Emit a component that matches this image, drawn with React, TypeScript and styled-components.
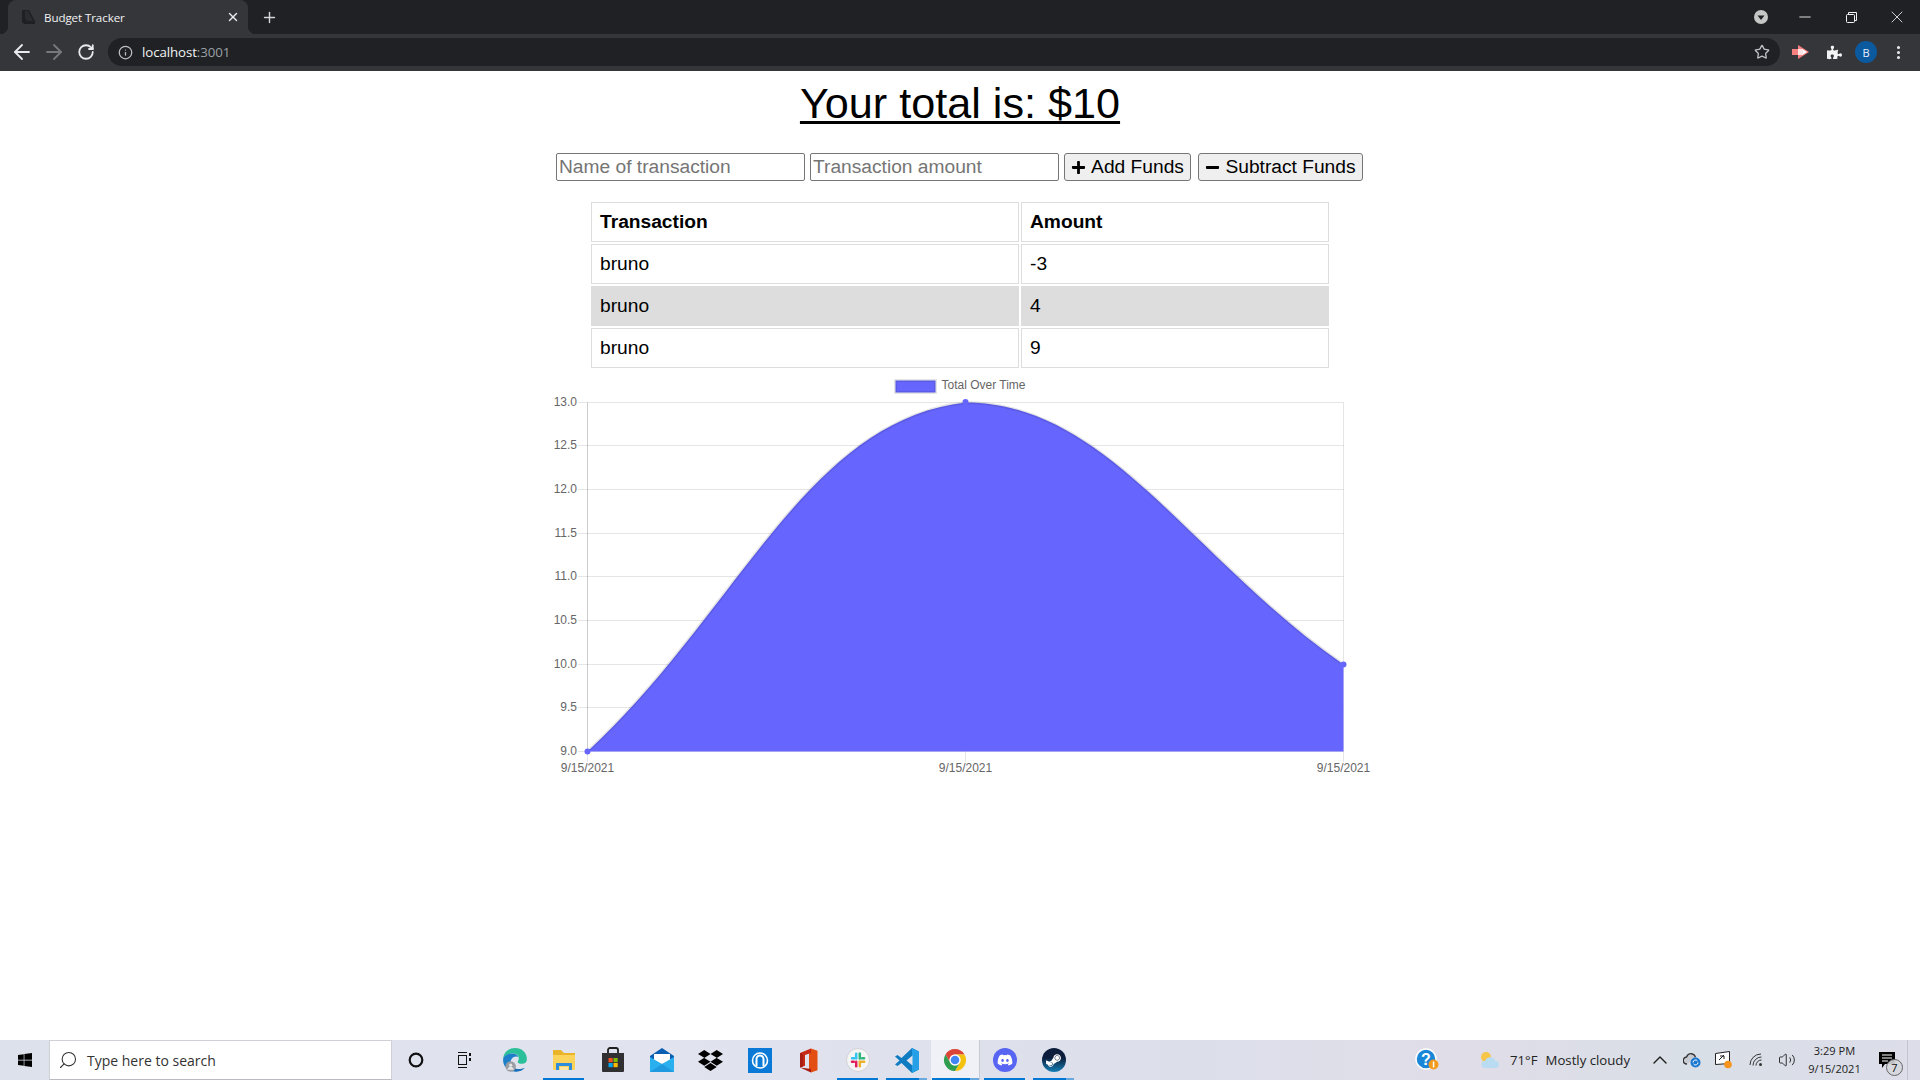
import styled, { createGlobalStyle } from 'styled-components';
import { ArrowLeft, ArrowRight, RotateCw, Info, Star, Plus, X, Minus, Search, EllipsisVertical, ChevronUp, Volume2 } from 'lucide-react';
import { FaPlus, FaMinus, FaWindows, FaDropbox, FaPuzzlePiece, FaDiscord, FaSteamSymbol } from 'react-icons/fa';

const GlobalStyle = createGlobalStyle`
  html, body { margin: 0; padding: 0; background: #fff; }
  body { font-family: "Liberation Sans", Arial, sans-serif; }
`;

const Screen = styled.div`
  width: 1920px;
  height: 1080px;
  display: flex;
  flex-direction: column;
  overflow: hidden;
`;

const TabStrip = styled.div`
  height: 34px;
  background: #202124;
  display: flex;
  align-items: flex-end;
  padding-left: 8px;
  color: #fff;
`;

const Tab = styled.div`
  position: relative;
  width: 240px;
  height: 34px;
  box-sizing: border-box;
  background: #35363a;
  border-radius: 8px 8px 0 0;
  display: flex;
  align-items: center;
  padding: 0 8px 0 14px;
  &::before, &::after {
    content: '';
    position: absolute;
    bottom: 0;
    width: 8px;
    height: 8px;
  }
  &::before { left: -8px; background: radial-gradient(circle at 0 0, transparent 8px, #35363a 8.5px); }
  &::after { right: -8px; background: radial-gradient(circle at 100% 0, transparent 8px, #35363a 8.5px); }
`;

const TabTitle = styled.span`
  flex: 1;
  margin-left: 8px;
  font: 11.6px "Open Sans", sans-serif;
  letter-spacing: -0.1px;
  color: #f1f3f4;
`;

const NewTab = styled.div`
  margin-left: 13px;
  height: 34px;
  display: flex;
  align-items: center;
  color: #d5d7da;
`;

const WindowControls = styled.div`
  margin-left: auto;
  height: 34px;
  display: flex;
  align-items: center;
  color: #f1f3f4;
`;

const WindowButton = styled.div<{ $w: number; $pr?: number }>`
  width: ${(p) => p.$w}px;
  box-sizing: border-box;
  padding-right: ${(p) => p.$pr ?? 0}px;
  display: flex;
  justify-content: center;
`;

const Toolbar = styled.div`
  height: 37px;
  background: #35363a;
  display: flex;
  align-items: flex-start;
  padding: 4px 0 0 6px;
  box-sizing: border-box;
  color: #f1f3f4;
`;

const NavButton = styled.div<{ $dim?: boolean; $w?: number }>`
  width: ${(p) => p.$w ?? 32}px;
  height: 28px;
  display: flex;
  align-items: center;
  justify-content: center;
  flex: none;
  color: ${(p) => (p.$dim ? '#77787b' : '#e8eaed')};
`;

const Omnibox = styled.div`
  width: 1672px;
  height: 28px;
  margin: 0 4px 0 6px;
  flex: none;
  background: #202124;
  border-radius: 14px;
  display: flex;
  align-items: center;
  padding: 0 10px 0 10px;
  box-sizing: border-box;
`;

const Url = styled.span`
  flex: 1;
  margin-left: 9px;
  font: 13.3px "Open Sans", sans-serif;
  color: #f1f3f4;
  letter-spacing: -0.1px;
  span { color: #9aa0a6; }
`;

const Avatar = styled.div`
  width: 22px;
  height: 22px;
  border-radius: 50%;
  background: #0b5aa0;
  color: #e8f0fe;
  font: 11px "Open Sans", sans-serif;
  display: flex;
  align-items: center;
  justify-content: center;
`;

const Main = styled.main`
  flex: 1;
  display: flex;
  flex-direction: column;
  align-items: center;
  background: #fff;
`;

const Total = styled.h1`
  margin: 8px 0 0;
  font-size: 43.2px;
  line-height: 49px;
  font-weight: 400;
  color: #000;
  text-decoration: underline;
  text-decoration-thickness: 3px;
  text-underline-offset: 3px;
`;

const Form = styled.form`
  display: flex;
  width: 808px;
  margin-top: 25px;
  height: 28px;
`;

const Input = styled.input`
  width: 249px;
  height: 28px;
  box-sizing: border-box;
  margin-right: 5px;
  padding: 1px 2px;
  font: 19.2px "Liberation Sans", Arial, sans-serif;
  border: 1px solid #767676;
  border-radius: 2px;
  background: #fff;
  &::placeholder { color: #757575; opacity: 1; }
`;

const Button = styled.button<{ $w: number }>`
  width: ${(p) => p.$w}px;
  height: 28px;
  box-sizing: border-box;
  margin-right: 7px;
  padding: 0;
  display: flex;
  align-items: center;
  justify-content: center;
  gap: 5px;
  font: 19.2px "Liberation Sans", Arial, sans-serif;
  color: #000;
  background: #efefef;
  border: 1px solid #767676;
  border-radius: 3px;
  &:last-child { margin-right: 0; }
`;

const Table = styled.table`
  margin-top: 19px;
  width: 742px;
  table-layout: fixed;
  border-collapse: separate;
  border-spacing: 2px;
  font-size: 19.2px;
  color: #000;
`;

const Th = styled.th`
  border: 1px solid #ddd;
  padding: 8px;
  line-height: 22px;
  text-align: left;
`;

const Td = styled.td`
  border: 1px solid #ddd;
  padding: 8px;
  line-height: 22px;
`;

const Row = styled.tr`
  &:nth-child(even) td { background: #ddd; }
`;

const ChartFigure = styled.svg`
  display: block;
  width: 840px;
  height: 420px;
  font-family: "Liberation Sans", Arial, sans-serif;
  font-size: 12px;
  fill: #666;
`;

const Taskbar = styled.footer`
  height: 40px;
  flex: none;
  display: flex;
  align-items: stretch;
  color: #1c1c1c;
  background: linear-gradient(90deg, #dde1ec 0%, #e1e4ee 35%, #dcdfea 62%, #e0dde8 76%, #d9dfe7 88%, #dcdde8 100%);
  box-sizing: border-box;
`;

const Start = styled.div`
  width: 49px;
  display: flex;
  align-items: center;
  justify-content: center;
  color: #000;
`;

const SearchBox = styled.div`
  width: 343px;
  box-sizing: border-box;
  background: #fff;
  border: 1px solid #cfd1d6;
  border-bottom-color: #b9bbc0;
  display: flex;
  align-items: center;
  padding-left: 8px;
  gap: 9px;
  font: 14px "Open Sans", sans-serif;
  color: #333;
`;

const SearchGlass = styled(Search)`
  transform: scaleX(-1);
`;

const TaskButton = styled.div<{ $w?: number; $open?: boolean; $stack?: boolean; $active?: boolean }>`
  position: relative;
  width: ${(p) => p.$w ?? 49}px;
  box-sizing: border-box;
  flex: none;
  display: flex;
  align-items: center;
  justify-content: center;
  background: ${(p) => (p.$active ? '#f0f1f6' : 'transparent')};
  border-right: ${(p) => (p.$active ? '1px solid #c9cbd3' : 'none')};
  &::after {
    content: '';
    display: ${(p) => (p.$open ? 'block' : 'none')};
    position: absolute;
    left: ${(p) => (p.$active ? 1 : 4)}px;
    right: ${(p) => (p.$active ? 0 : 4)}px;
    bottom: 0;
    height: 2px;
    background: ${(p) =>
      p.$stack ? 'linear-gradient(90deg, #0078d4 80%, #6aa8de 80%)' : '#0078d4'};
  }
`;

const AppDisc = styled.div<{ $bg: string }>`
  width: 24px;
  height: 24px;
  border-radius: 50%;
  background: ${(p) => p.$bg};
  color: #fff;
  display: flex;
  align-items: center;
  justify-content: center;
`;

const Tray = styled.div`
  margin-left: auto;
  display: flex;
  align-items: stretch;
`;

const TrayCell = styled.div<{ $w: number }>`
  width: ${(p) => p.$w}px;
  display: flex;
  align-items: center;
  justify-content: center;
`;

const Weather = styled.div`
  width: 198px;
  box-sizing: border-box;
  display: flex;
  align-items: center;
  padding-left: 33px;
  font: 13.2px "Open Sans", sans-serif;
  color: #222;
`;

const WeatherTemp = styled.span`
  margin-left: 9px;
  margin-right: 8px;
`;

const Clock = styled.div`
  width: 67px;
  display: flex;
  flex-direction: column;
  align-items: center;
  justify-content: center;
  font: 11.1px/18px "Open Sans", sans-serif;
  color: #222;
`;

const Notification = styled.div`
  position: relative;
  width: 34px;
  box-sizing: border-box;
  padding-left: 4px;
  display: flex;
  align-items: center;
  justify-content: center;
`;

const Badge = styled.span`
  position: absolute;
  left: 18px;
  top: 19px;
  width: 15px;
  height: 15px;
  border-radius: 50%;
  border: 1px solid #666;
  background: rgba(214, 215, 220, 0.9);
  font: 11px/15px "Open Sans", sans-serif;
  text-align: center;
  color: #111;
`;

const ShowDesktop = styled.div`
  width: 12px;
  margin-left: 5px;
  border-left: 1px solid #c3c5ce;
`;

const ACCENT = '#6666ff';
const GRID = 'rgba(0,0,0,0.1)';
const yTicks: [string, number][] = [
  ['13.0', 402.5], ['12.5', 445.5], ['12.0', 489.5], ['11.5', 533.5], ['11.0', 576.5],
  ['10.5', 620.5], ['10.0', 664.5], ['9.5', 707.5], ['9.0', 751.5],
];
const xTicks = [587.5, 965.5, 1343.5];
const CURVE = 'M587.5 751.5C738.5 611.9 805.4 421 965.5 402.5C1107.6 402.5 1191.8 559.4 1343.5 664.5';

const BudgetChart = () => (
  <ChartFigure viewBox="540 370 840 420">
    <rect x="895.5" y="380.5" width="40" height="12" fill={ACCENT} stroke={GRID} strokeWidth="3" />
    <text x="941.5" y="389">Total Over Time</text>
    {yTicks.map(([label, y]) => (
      <g key={label}>
        <line x1="578" x2="1343.5" y1={y} y2={y} stroke={GRID} />
        <text x="577" y={y + 3} textAnchor="end">{label}</text>
      </g>
    ))}
    {xTicks.map((x) => (
      <g key={x}>
        <line x1={x} x2={x} y1="402.5" y2="762" stroke={GRID} />
        <text x={x} y="772" textAnchor="middle">9/15/2021</text>
      </g>
    ))}
    <line x1="587.5" x2="587.5" y1="402.5" y2="751.5" stroke={GRID} />
    <path d={`${CURVE}L1343.5 751.5L587.5 751.5Z`} fill={ACCENT} />
    <path d={CURVE} fill="none" stroke={GRID} strokeWidth="3" />
    <circle cx="587.5" cy="751.5" r="3" fill={ACCENT} />
    <circle cx="965.5" cy="402" r="3" fill={ACCENT} />
    <circle cx="1343.5" cy="664.5" r="3" fill={ACCENT} />
  </ChartFigure>
);

const Favicon = () => (
  <svg width="14" height="16" viewBox="0 0 14 16">
    <path d="M0 1h7l6 11v3H2l-2-2z" fill="#1f2023" />
    <path d="M3 2h3l5 10H5L3 9z" fill="#2b2c30" />
  </svg>
);

const ProfileDot = () => (
  <svg width="14" height="14" viewBox="0 0 14 14">
    <circle cx="7" cy="7" r="7" fill="#c4c7c5" />
    <path d="M3.5 5.5h7L7 10z" fill="#202124" />
  </svg>
);

const RestoreIcon = () => (
  <svg width="11" height="11" viewBox="0 0 11 11" fill="none" stroke="#f1f3f4">
    <path d="M2.5 2.5V.5h8v8h-2" />
    <rect x=".5" y="2.5" width="8" height="8" rx="1" />
  </svg>
);

const RedExtension = () => (
  <svg width="18" height="14" viewBox="0 0 18 14">
    <path d="M0 4h6V0l11 7-11 7v-4H0z" fill="#f98080" />
    <path d="M6 4h5v6H6z" fill="#fbe3e3" />
    <path d="M11 4.5l4 2.5-4 2.5z" fill="#fff" />
  </svg>
);

const CortanaIcon = () => (
  <svg width="16" height="16" viewBox="0 0 16 16">
    <circle cx="8" cy="8" r="6.3" fill="none" stroke="#111" strokeWidth="2.2" />
  </svg>
);

const TaskViewIcon = () => (
  <svg width="16" height="16" viewBox="0 0 16 16" fill="none" stroke="#111">
    <path d="M1 .5h9M1 15.5h9" />
    <rect x="1.5" y="3.5" width="8" height="9" />
    <path d="M13 1v3M13 6v3" strokeWidth="2" />
  </svg>
);

const EdgeIcon = () => (
  <svg width="26" height="26" viewBox="0 0 24 24">
    <path d="M1 12C1 5 6 1 12 1c6.500 0 11 4.500 11 10 0 3-2 4.500-5 4.500-2 0-3.500-.7-3.500-2 0-.8 1-1.200 1-3C15.500 7.500 13 6 10 6 5 6 1 9 1 12z" fill="#2cc09a" />
    <path d="M1 12c0-3.500 4-6 8.500-6 3 0 5 1.500 5.500 3.500C13.500 8 9 9 8 13c-.8 3.500 1 7 4 9.500C6 23 1 18 1 12z" fill="#1d7fc9" />
    <path d="M12 22.800c-2-1.500-3.400-3.500-3.500-6 2 3 6 4 9 3.500 2-.3 3.500-1 4-1.500-2 2.800-5.500 4.500-9.500 4z" fill="#1a6fb8" />
    <circle cx="8" cy="18" r="4.800" fill="#9a9da2" />
    <circle cx="8" cy="16.800" r="1.500" fill="#e3e4e6" />
    <path d="M5 21c.4-2 1.500-2.800 3-2.800s2.600.8 3 2.800z" fill="#e3e4e6" />
  </svg>
);

const FolderIcon = () => (
  <svg width="24" height="22" viewBox="0 0 24 22">
    <path d="M1 1h8l3 3h11v6H1z" fill="#e9b32a" />
    <path d="M1 6h22v14a1 1 0 0 1-1 1H2a1 1 0 0 1-1-1z" fill="#fcd45c" />
    <path d="M4 21v-6c0-.6.4-1 1-1h14c.6 0 1 .4 1 1v6h-3v-4H7v4z" fill="#2e8ddc" />
    <path d="M8 18h8v3H8z" fill="#fde6a1" />
  </svg>
);

const StoreIcon = () => (
  <svg width="24" height="26" viewBox="0 0 24 26">
    <path d="M7 6V3a2 2 0 0 1 2-2h6a2 2 0 0 1 2 2v3" fill="none" stroke="#1f1f1f" strokeWidth="1.800" />
    <path d="M1 6h22v18a1 1 0 0 1-1 1H2a1 1 0 0 1-1-1z" fill="#303033" />
    <rect x="7.500" y="11" width="4.200" height="4.200" fill="#f25022" />
    <rect x="12.500" y="11" width="4.200" height="4.200" fill="#7fba00" />
    <rect x="7.500" y="16" width="4.200" height="4.200" fill="#00a4ef" />
    <rect x="12.500" y="16" width="4.200" height="4.200" fill="#ffb900" />
  </svg>
);

const MailIcon = () => (
  <svg width="24" height="25" viewBox="0 0 24 25">
    <path d="M12 0l12 8v3H0V8z" fill="#0b5fb0" />
    <path d="M4 6h16v9H4z" fill="#fff" />
    <path d="M0 9l12 7 12-7v15H0z" fill="#2ab0ee" />
    <path d="M0 24l12-8 12 8z" fill="#1f9ae0" />
  </svg>
);

const BlueAppIcon = () => (
  <svg width="24" height="25" viewBox="0 0 24 25">
    <rect width="24" height="25" fill="#0a7ad6" />
    <circle cx="12" cy="12.500" r="7.500" fill="none" stroke="#fff" strokeWidth="1.600" />
    <path d="M8.500 18V11a3.500 3.500 0 0 1 7 0v7" fill="none" stroke="#fff" strokeWidth="2" />
  </svg>
);

const OfficeIcon = () => (
  <svg width="19" height="25" viewBox="0 0 19 25">
    <path d="M12 0.500l6.500 2.300v19.400L12 24.500l-2-2V3z" fill="#e34f13" />
    <path d="M12 0.500L1 5v14.500l5-1.800V7l6-2z" fill="#c62a14" />
    <path d="M1 19.500L12 24.500v-3.500z" fill="#a61c12" />
    <path d="M1 5v14.500l3-1V6z" fill="#a81e14" />
  </svg>
);

const SlackIcon = () => (
  <svg width="24" height="24" viewBox="0 0 24 24">
    <circle cx="12" cy="12" r="11.500" fill="#f5f5f6" stroke="#d0d1d5" />
    <g strokeWidth="2.500" strokeLinecap="round" fill="none">
      <path d="M10.200 5.800v4.500H6" stroke="#36c5f0" />
      <path d="M13.800 5.500v5" stroke="#2eb67d" />
      <path d="M18 10.200h-2" stroke="#2eb67d" />
      <path d="M13.800 18.200v-4.400h4.400" stroke="#ecb22e" />
      <path d="M10.200 13.800v4.500" stroke="#e01e5a" />
      <path d="M6 13.800h1.800" stroke="#e01e5a" />
    </g>
  </svg>
);

const VsCodeIcon = () => (
  <svg width="24" height="25" viewBox="0 0 24 25">
    <path d="M17 0l7 3.500v18L17 25 6.500 15 2.500 18 0 16.500l4.500-4-4.500-4L2.500 7l4 3z" fill="#0f7cc2" />
    <path d="M17 0l7 3.500v18L17 25z" fill="#25a0e6" />
    <path d="M17.500 7.500v10l-6-5z" fill="#e0e3ee" />
  </svg>
);

const ChromeIcon = () => (
  <svg width="24" height="24" viewBox="0 0 24 24">
    <path d="M12 1A11 11 0 0 1 21.530 6.500H12A5.500 5.500 0 0 0 7.240 14.750L2.470 6.500A11 11 0 0 1 12 1Z" fill="#db4437" />
    <path d="M21.530 6.500A11 11 0 0 1 12 23L16.760 14.750A5.500 5.500 0 0 0 12 6.500Z" fill="#f4c20d" />
    <path d="M12 23A11 11 0 0 1 2.470 6.500L7.240 14.750A5.500 5.500 0 0 0 16.760 14.750Z" fill="#2f9e4f" />
    <circle cx="12" cy="12" r="5.500" fill="#fff" />
    <circle cx="12" cy="12" r="4.300" fill="#4285f4" />
  </svg>
);

const HelpIcon = () => (
  <svg width="25" height="25" viewBox="0 0 25 25">
    <circle cx="11" cy="11" r="10" fill="#1a86d8" stroke="#fff" strokeWidth="1.500" />
    <text x="11" y="17" textAnchor="middle" fontFamily="Liberation Sans" fontWeight="700" fontSize="16" fill="#fff">?</text>
    <circle cx="18.500" cy="16.500" r="5" fill="#f29b1c" />
    <rect x="17.800" y="13.500" width="1.500" height="6" fill="#fff" />
  </svg>
);

const WeatherIcon = () => (
  <svg width="22" height="20" viewBox="0 0 22 20">
    <circle cx="7" cy="7" r="5" fill="#f5c64a" />
    <path d="M6 18a3.500 3.500 0 0 1 0-7c1-3 4-4.500 7-3.500 2 .7 3 2 3.300 3.500a3.500 3.500 0 0 1 .2 7z" fill="#b9dcf3" />
  </svg>
);

const CloudSyncIcon = () => (
  <svg width="18" height="16" viewBox="0 0 18 16">
    <path d="M4 12a3.500 3.500 0 0 1-.5-7C4.500 2.500 7 1 9.500 2c1.700.6 2.700 1.800 3 3.300" fill="#c9cbd2" stroke="#333" strokeWidth="1.400" />
    <circle cx="12.500" cy="10.500" r="5" fill="#1a78d0" />
    <path d="M10 10.500a2.500 2.500 0 0 1 4.500-1.500M15 10.500a2.500 2.500 0 0 1-4.500 1.500" fill="none" stroke="#fff" />
  </svg>
);

const ScreenIcon = () => (
  <svg width="19" height="18" viewBox="0 0 19 18">
    <path d="M1.500 2.500l14-2v12l-14 1z" fill="#fff" stroke="#222" />
    <path d="M5 9l5-5M6 5h4v3" fill="none" stroke="#222" />
    <circle cx="14" cy="13.500" r="3.800" fill="#f7941d" />
  </svg>
);

const WifiIcon = () => (
  <svg width="14" height="14" viewBox="0 0 14 14" fill="none" stroke="#333" strokeWidth="1">
    <path d="M1 12A11 11 0 0 1 12 1" />
    <path d="M4 12.500A8.500 8.500 0 0 1 12.500 4" />
    <path d="M7 12.500A5.500 5.500 0 0 1 12.500 7" />
    <circle cx="11.500" cy="11.500" r="1.500" fill="#333" stroke="none" />
  </svg>
);

const NotificationGlyph = () => (
  <svg width="16" height="16" viewBox="0 0 16 16">
    <path d="M0 0h16v12H6l-3 4v-4H0z" fill="#000" />
    <path d="M3 3h10M3 6h10M3 9h6" stroke="#fff" />
  </svg>
);

const App = () => (
  <Screen>
    <GlobalStyle />
    <TabStrip>
      <Tab>
        <Favicon />
        <TabTitle>Budget Tracker</TabTitle>
        <X size={14} strokeWidth={2.4} color="#e8eaed" />
      </Tab>
      <NewTab><Plus size={17} strokeWidth={2} /></NewTab>
      <WindowControls>
        <WindowButton $w={34} $pr={8}><ProfileDot /></WindowButton>
        <WindowButton $w={46}><Minus size={18} strokeWidth={1.2} /></WindowButton>
        <WindowButton $w={46}><RestoreIcon /></WindowButton>
        <WindowButton $w={46}><X size={20} strokeWidth={1} /></WindowButton>
      </WindowControls>
    </TabStrip>
    <Toolbar>
      <NavButton><ArrowLeft size={24} strokeWidth={1.8} /></NavButton>
      <NavButton $dim><ArrowRight size={24} strokeWidth={1.8} /></NavButton>
      <NavButton><RotateCw size={18} strokeWidth={2.4} /></NavButton>
      <Omnibox>
        <Info size={15} color="#bdc1c6" />
        <Url>localhost<span>:3001</span></Url>
        <Star size={16} color="#bdc1c6" />
      </Omnibox>
      <NavButton $w={34}><RedExtension /></NavButton>
      <NavButton><FaPuzzlePiece size={15} color="#f1f3f4" /></NavButton>
      <NavButton><Avatar>B</Avatar></NavButton>
      <NavButton><EllipsisVertical size={17} strokeWidth={2.4} /></NavButton>
    </Toolbar>
    <Main>
      <Total>Your total is: $10</Total>
      <Form>
        <Input placeholder="Name of transaction" />
        <Input placeholder="Transaction amount" />
        <Button type="button" $w={127}><FaPlus size={15} /> Add Funds</Button>
        <Button type="button" $w={165}><FaMinus size={15} /> Subtract Funds</Button>
      </Form>
      <Table>
        <colgroup>
          <col width="428" />
          <col width="308" />
        </colgroup>
        <thead>
          <tr><Th>Transaction</Th><Th>Amount</Th></tr>
        </thead>
        <tbody>
          <Row><Td>bruno</Td><Td>-3</Td></Row>
          <Row><Td>bruno</Td><Td>4</Td></Row>
          <Row><Td>bruno</Td><Td>9</Td></Row>
        </tbody>
      </Table>
      <BudgetChart />
    </Main>
    <Taskbar>
      <Start><FaWindows size={16} /></Start>
      <SearchBox><SearchGlass size={20} strokeWidth={1.3} />Type here to search</SearchBox>
      <TaskButton $w={48}><CortanaIcon /></TaskButton>
      <TaskButton $w={50}><TaskViewIcon /></TaskButton>
      <TaskButton><EdgeIcon /></TaskButton>
      <TaskButton $open><FolderIcon /></TaskButton>
      <TaskButton><StoreIcon /></TaskButton>
      <TaskButton><MailIcon /></TaskButton>
      <TaskButton><FaDropbox size={25} color="#000" /></TaskButton>
      <TaskButton><BlueAppIcon /></TaskButton>
      <TaskButton><OfficeIcon /></TaskButton>
      <TaskButton $open><SlackIcon /></TaskButton>
      <TaskButton $open $stack><VsCodeIcon /></TaskButton>
      <TaskButton $open $active $stack><ChromeIcon /></TaskButton>
      <TaskButton $open><AppDisc $bg="#5865f2"><FaDiscord size={16} /></AppDisc></TaskButton>
      <TaskButton $open $stack><AppDisc $bg="linear-gradient(#0b1d3a 40%, #1580b8)"><FaSteamSymbol size={17} /></AppDisc></TaskButton>
      <Tray>
        <TrayCell $w={38}><HelpIcon /></TrayCell>
        <Weather>
          <WeatherIcon />
          <WeatherTemp>71°F</WeatherTemp>
          Mostly cloudy
        </Weather>
        <TrayCell $w={32}><ChevronUp size={24} strokeWidth={1.4} /></TrayCell>
        <TrayCell $w={31}><CloudSyncIcon /></TrayCell>
        <TrayCell $w={32}><ScreenIcon /></TrayCell>
        <TrayCell $w={34}><WifiIcon /></TrayCell>
        <TrayCell $w={28}><Volume2 size={18} strokeWidth={1.2} /></TrayCell>
        <Clock><span>3:29 PM</span><span>9/15/2021</span></Clock>
        <Notification><NotificationGlyph /><Badge>7</Badge></Notification>
        <ShowDesktop />
      </Tray>
    </Taskbar>
  </Screen>
);

export default App;
